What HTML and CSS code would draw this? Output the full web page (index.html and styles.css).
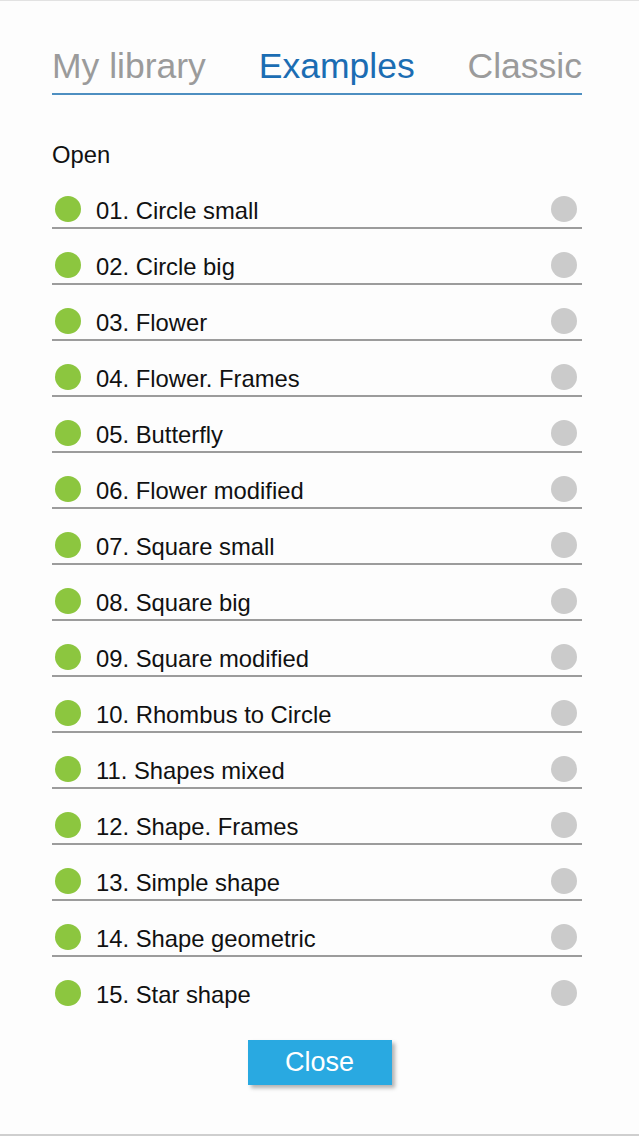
FILE: index.html
```html
<!DOCTYPE html>
<html>
<head>
<meta charset="utf-8">
<link rel="stylesheet" href="styles.css">
</head>
<body>
<div class="page">
  <div class="tabs">
    <span class="tab">My library</span>
    <span class="tab active">Examples</span>
    <span class="tab">Classic</span>
  </div>
  <div class="open">Open</div>
  <ul class="list">
    <li class="row"><span class="dot green"></span><span class="label">01. Circle small</span><span class="dot gray"></span></li>
    <li class="row"><span class="dot green"></span><span class="label">02. Circle big</span><span class="dot gray"></span></li>
    <li class="row"><span class="dot green"></span><span class="label">03. Flower</span><span class="dot gray"></span></li>
    <li class="row"><span class="dot green"></span><span class="label">04. Flower. Frames</span><span class="dot gray"></span></li>
    <li class="row"><span class="dot green"></span><span class="label">05. Butterfly</span><span class="dot gray"></span></li>
    <li class="row"><span class="dot green"></span><span class="label">06. Flower modified</span><span class="dot gray"></span></li>
    <li class="row"><span class="dot green"></span><span class="label">07. Square small</span><span class="dot gray"></span></li>
    <li class="row"><span class="dot green"></span><span class="label">08. Square big</span><span class="dot gray"></span></li>
    <li class="row"><span class="dot green"></span><span class="label">09. Square modified</span><span class="dot gray"></span></li>
    <li class="row"><span class="dot green"></span><span class="label">10. Rhombus to Circle</span><span class="dot gray"></span></li>
    <li class="row"><span class="dot green"></span><span class="label">11. Shapes mixed</span><span class="dot gray"></span></li>
    <li class="row"><span class="dot green"></span><span class="label">12. Shape. Frames</span><span class="dot gray"></span></li>
    <li class="row"><span class="dot green"></span><span class="label">13. Simple shape</span><span class="dot gray"></span></li>
    <li class="row"><span class="dot green"></span><span class="label">14. Shape geometric</span><span class="dot gray"></span></li>
    <li class="row last"><span class="dot green"></span><span class="label">15. Star shape</span><span class="dot gray"></span></li>
  </ul>
  <div class="footer">
    <button class="close">Close</button>
  </div>
</div>
</body>
</html>
```
FILE: styles.css
```css
html, body {
  margin: 0;
  padding: 0;
  background: #fdfdfd;
}
body {
  font-family: "Liberation Sans", Arial, sans-serif;
}
.page {
  box-sizing: border-box;
  height: 1136px;
  border-top: 1px solid #e2e2e2;
  border-bottom: 2px solid #cfcfcf;
  padding: 0 57px 0 52px;
  display: flex;
  flex-direction: column;
}
.tabs {
  display: flex;
  justify-content: space-between;
  padding-top: 45px;
  padding-bottom: 7px;
  border-bottom: 2px solid #4e8fc1;
  font-size: 35.5px;
  line-height: 40px;
}
.tab {
  color: #9b9b9b;
}
.tab.active {
  color: #1b6db3;
}
.open {
  margin-top: 47px;
  font-size: 23.8px;
  line-height: 26px;
  color: #111;
}
.list {
  list-style: none;
  margin: 5px 0 0;
  padding: 0;
}
.row {
  display: flex;
  align-items: center;
  height: 30px;
  padding: 20.5px 5px 3.5px 3px;
  border-bottom: 2px solid #9c9c9c;
}
.row.last {
  border-bottom-color: transparent;
}
.dot {
  width: 26px;
  height: 26px;
  border-radius: 50%;
  flex: none;
}
.green {
  background: #8cc63f;
}
.gray {
  background: #cbcbcb;
  margin-left: auto;
}
.label {
  margin-left: 15px;
  padding-top: 4px;
  font-size: 23.8px;
  line-height: 26px;
  color: #111;
}
.footer {
  display: flex;
  justify-content: center;
  margin-top: 27px;
  margin-right: -5px;
}
.close {
  width: 144px;
  height: 45px;
  border: none;
  background: #29a9e1;
  color: #fff;
  font-family: "Liberation Sans", Arial, sans-serif;
  font-size: 27px;
  padding: 0;
  box-shadow: 3px 3px 4px rgba(0, 0, 0, 0.3);
}
```
